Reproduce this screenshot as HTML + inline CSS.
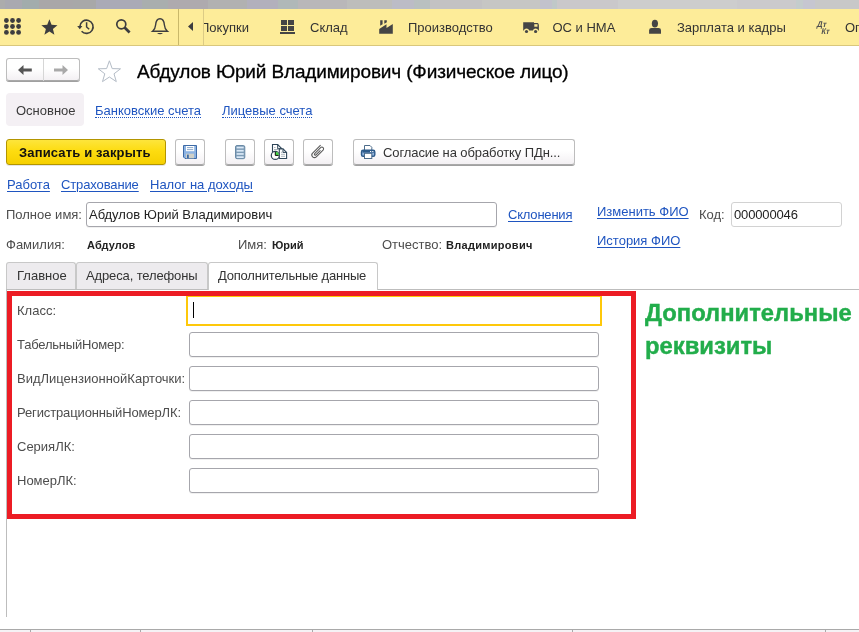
<!DOCTYPE html>
<html><head><meta charset="utf-8">
<style>
*{box-sizing:border-box;margin:0;padding:0}
html,body{width:859px;height:632px;overflow:hidden;background:#fff}
body{position:relative;will-change:transform;font-family:"Liberation Sans",sans-serif;font-size:13px;color:#333}
.a{position:absolute;white-space:nowrap;line-height:15px}
.top{position:absolute;left:0;top:0;width:859px;height:9px;background:linear-gradient(90deg,#acacac 0px,#acacac 5px,#a9a9b0 5px,#a9a9b0 22px,#a2acac 22px,#a2acac 39px,#a9a7a8 39px,#a9a7a8 73px,#a8a8a8 73px,#a8a8a8 96px,#aaaab6 96px,#aaaab6 142px,#a9aeae 142px,#a9aeae 168px,#aeaaae 168px,#aeaaae 208px,#b1b1b1 208px,#b1b1b1 247px,#b2b0bc 247px,#b2b0bc 278px,#b0b8b8 278px,#b0b8b8 298px,#b9b7b9 298px,#b9b7b9 347px,#bdbdbb 347px,#bdbdbb 392px,#bcbcc6 392px,#bcbcc6 414px,#b9c0c0 414px,#b9c0c0 430px,#c3c2c3 430px,#c3c2c3 482px,#c6c6c4 482px,#c6c6c4 540px,#c2c2cc 540px,#c2c2cc 552px,#c0c8c8 552px,#c0c8c8 557px,#cac8ca 557px,#cac8ca 618px,#cdcdcd 618px,#cdcdcd 737px,#cbcacc 737px,#cbcacc 796px,#c4cccc 796px,#c4cccc 803px,#c6c6d0 803px,#c6c6d0 815px,#c8c8c8 815px,#c8c8c8 859px)}
.bar{position:absolute;left:0;top:9px;width:859px;height:37px;background:#fdec99;border-bottom:1px solid #d9c77c}
.sep{position:absolute;top:9px;width:1px;height:36px}
.tb{color:#333}
.btn{position:absolute;border:1px solid #bdbdbd;border-bottom-color:#a9a9a9;border-radius:3px;background:linear-gradient(#fff 0%,#fff 45%,#f3f0f3 100%);box-shadow:0 1px 0 #a0a0a0}
.lnk{color:#1f55c0;text-decoration:underline;text-underline-offset:2px}
.dot{color:#1f55c0;border-bottom:1px dotted #1f55c0}
.inp{position:absolute;border:1px solid #a6a6ac;border-radius:3px;background:#fff;box-shadow:0 1px 0 rgba(0,0,0,0.06)}
.lbl{color:#4d4d4d}
.bold{font-weight:bold;font-size:11px;color:#222}
</style></head><body>
<div class="top"></div>
<div class="bar"></div>
<div class="sep" style="left:178px;background:#c9b86a"></div>
<div class="sep" style="left:203px;background:#dccb85"></div>

<!-- toolbar icons -->
<svg style="position:absolute;left:0;top:0" width="859" height="46" viewBox="0 0 859 46">
 <g fill="#3d3d3f">
  <circle cx="6.4" cy="20.5" r="2.4"/><circle cx="12.5" cy="20.5" r="2.4"/><circle cx="18.6" cy="20.5" r="2.4"/>
  <circle cx="6.4" cy="26.5" r="2.4"/><circle cx="12.5" cy="26.5" r="2.4"/><circle cx="18.6" cy="26.5" r="2.4"/>
  <circle cx="6.4" cy="32.4" r="2.4"/><circle cx="12.5" cy="32.4" r="2.4"/><circle cx="18.6" cy="32.4" r="2.4"/>
  <polygon points="49.40,19.30 51.57,24.81 57.48,25.17 52.92,28.94 54.40,34.68 49.40,31.50 44.40,34.68 45.88,28.94 41.32,25.17 47.23,24.81"/>
  <polygon points="193,22 193,31 188,26.5"/>
  <polygon points="77.2,26 82.4,26 79.8,29.2"/>
  <path d="M157 33 Q160 35.6 163 33 Z"/>
 </g>
 <g fill="none" stroke="#3d3d3f">
  <path d="M79.9 26.6 A6.6 6.6 0 1 1 81.6 31.2" stroke-width="1.6"/>
  <path d="M86.6 22.3 V27 L89.2 29.3" stroke-width="1.5"/>
  <circle cx="121.3" cy="24.3" r="4.5" stroke-width="1.7"/>
  <path d="M124.6 27.6 L129.6 32.4" stroke-width="2.8"/>
  <path d="M152.6 31.2 C154.6 29.6 155.4 27.6 155.6 25 C155.9 20.8 157.6 18.7 160 18.7 C162.4 18.7 164.1 20.8 164.4 25 C164.6 27.6 165.4 29.6 167.4 31.2 Z" stroke-width="1.4"/>
 </g>
 <g fill="#454545">
  <rect x="281" y="20" width="6" height="5"/><rect x="288" y="20" width="6" height="5"/>
  <rect x="281" y="26" width="6" height="5"/><rect x="288" y="26" width="6" height="5"/>
  <rect x="280" y="32" width="15" height="2"/>
  <polygon points="379.2,29.1 386.5,24.2 386.5,28 392.8,24.1 392.8,33.8 379.2,33.8"/>
  <polygon points="380.2,20.2 382.6,20.2 382.6,24.3 380.2,25.8"/>
  <polygon points="384.3,20.2 386.8,20.2 386.8,22.3 384.3,23.8"/>
  <path d="M523.2 22.2 H534 V23.1 H537.6 Q538.9 23.6 538.9 25.5 V30.6 H538.3 A2.8 2.8 0 0 0 532.9 30.6 H529.2 A2.8 2.8 0 0 0 523.8 30.6 H523.2 Z"/>
  <circle cx="526.5" cy="31.5" r="1.6"/><circle cx="535.6" cy="31.5" r="1.6"/>
  <ellipse cx="654.9" cy="23.6" rx="3.1" ry="3.9"/>
  <path d="M649.1 33.8 V30.2 Q649.1 28 651.6 28 H658.5 Q661 28 661 30.2 V33.8 Z"/>
 </g>
 <rect x="534.3" y="24.2" width="3.2" height="2.5" fill="#fdec99"/>
 <g transform="translate(823 27) skewX(-12) translate(-823 -27)" font-family="Liberation Sans" font-weight="bold" font-size="8.2" fill="#505050">
 <text x="816.5" y="26.6" textLength="9.5" lengthAdjust="spacingAndGlyphs">Дт</text>
 <text x="822.5" y="34" textLength="8" lengthAdjust="spacingAndGlyphs">Кт</text>
 </g>
</svg>

<div style="position:absolute;left:204px;top:9px;width:655px;height:36px;overflow:hidden">
 <div class="a tb" style="left:-4px;top:11px">Покупки</div>
 <div class="a tb" style="left:106px;top:11px">Склад</div>
 <div class="a tb" style="left:204px;top:11px">Производство</div>
 <div class="a tb" style="left:348.5px;top:11px">ОС и НМА</div>
 <div class="a tb" style="left:473px;top:11px">Зарплата и кадры</div>
 <div class="a tb" style="left:641px;top:11px">Операции</div>
</div>

<!-- header -->
<div class="btn" style="left:6px;top:58px;width:74px;height:23px"></div>
<div style="position:absolute;left:43px;top:59px;width:1px;height:22px;background:#d6d6d6"></div>
<svg style="position:absolute;left:0;top:50px" width="130" height="40" viewBox="0 50 130 40">
 <path d="M18 70 L23.5 65 V68.6 H31.8 V71.4 H23.5 V75 Z" fill="#555"/>
 <path d="M68 70 L62.5 65 V68.6 H54 V71.4 H62.5 V75 Z" fill="#a9a9a9"/>
 <polygon points="109.4,60.8 112.2,68.6 120.5,68.8 114,73.8 116.3,81.6 109.4,77 102.5,81.6 104.8,73.8 98.3,68.8 106.6,68.6" fill="none" stroke="#b4bcc6" stroke-width="1"/>
</svg>
<div class="a" style="left:137px;top:61px;font-size:19px;letter-spacing:-0.15px;line-height:22px;color:#000;-webkit-text-stroke:0.3px #000">Абдулов Юрий Владимирович (Физическое лицо)</div>

<div style="position:absolute;left:6px;top:93px;width:78px;height:33px;background:#f4f0f4;border-radius:4px"></div>
<div class="a" style="left:16px;top:103px;color:#3a3a3a">Основное</div>
<div class="a dot" style="left:95px;top:103px;height:15px">Банковские счета</div>
<div class="a dot" style="left:222px;top:103px;height:15px">Лицевые счета</div>

<!-- command bar -->
<div style="position:absolute;left:6px;top:139px;width:160px;height:26px;border:1px solid #b39500;border-radius:3px;background:linear-gradient(#fde53c 0%,#fddc10 45%,#f6d000 100%);box-shadow:0 1px 0 rgba(0,0,0,0.1)"></div>
<div class="a" style="left:19px;top:145px;font-weight:bold;color:#111;letter-spacing:0.15px">Записать и закрыть</div>
<div class="btn" style="left:175px;top:139px;width:30px;height:26px"></div>
<div class="btn" style="left:225px;top:139px;width:30px;height:26px"></div>
<div class="btn" style="left:264px;top:139px;width:30px;height:26px"></div>
<div class="btn" style="left:303px;top:139px;width:30px;height:26px"></div>
<div class="btn" style="left:353px;top:139px;width:222px;height:26px"></div>
<div class="a" style="left:383px;top:145px;color:#333;letter-spacing:-0.1px">Согласие на обработку ПДн...</div>
<svg style="position:absolute;left:170px;top:139px" width="220" height="27" viewBox="170 139 220 27">
 <!-- floppy -->
 <path d="M183.5 145.5 H196.5 V158.5 H185 L183.5 157 Z" fill="#8db3e2" stroke="#3d6aa6" stroke-width="1"/>
 <rect x="186" y="146" width="8.2" height="5.2" fill="#fff"/>
 <rect x="187" y="147.2" width="6.2" height="0.9" fill="#7e9fc4"/>
 <rect x="187" y="149.2" width="6.2" height="0.9" fill="#7e9fc4"/>
 <rect x="186" y="153.7" width="8" height="4.6" fill="#cfd0c8"/>
 <rect x="187" y="154.6" width="1.8" height="3.7" fill="#3d6aa6"/>
 <!-- list -->
 <rect x="235.5" y="145.5" width="9.3" height="13.2" rx="1.5" fill="#7d9cb6" stroke="#6a8aa6" stroke-width="1"/>
 <rect x="236.6" y="146.7" width="7.1" height="1.7" fill="#dbe9f7"/>
 <rect x="236.6" y="149.9" width="7.1" height="1.7" fill="#dbe9f7"/>
 <rect x="236.6" y="153.1" width="7.1" height="1.7" fill="#dbe9f7"/>
 <rect x="236.6" y="156.3" width="7.1" height="1.7" fill="#dbe9f7"/>
 <!-- docs -->
 <path d="M272.5 155 V144.5 H277.7 L282 148.8" fill="#fff" stroke="#2e4558" stroke-width="1.1"/>
 <path d="M279.3 158.5 V148.8 H283 L286.6 152.4 V158.5 Z" fill="#fff" stroke="#2e4558" stroke-width="1.1"/>
 <path d="M277.7 144.5 V148.8 H282" fill="none" stroke="#2e4558" stroke-width="1"/>
 <path d="M283 148.8 V152.4 H286.6" fill="none" stroke="#2e4558" stroke-width="1"/>
 <g stroke="#9aa4ac" stroke-width="0.8"><path d="M274 147.5 H275.5 M274 149.5 H278 M281 152.3 H282.5 M281 154.3 H285 M281 156.3 H285"/></g>
 <circle cx="275.3" cy="155.4" r="4" fill="#fff" stroke="#2e4558" stroke-width="1.2"/>
 <path d="M275.3 155.4 V151.8 A3.6 3.6 0 0 1 278.9 155.4 Z" fill="#46d646"/>
 <path d="M275.3 151.8 V155.4 H278.6" fill="none" stroke="#111" stroke-width="1"/>
 <!-- clip -->
 <g transform="translate(318,151.5) rotate(45)" fill="none" stroke="#5a5a5a" stroke-width="1.05">
  <path d="M-2.6 -6.3 V5 A2.6 2.6 0 0 0 2.6 5 V-4.6 A1.75 1.75 0 0 0 -0.9 -4.6 V3.8 A0.9 0.9 0 0 0 0.9 3.8 V-2.6"/>
 </g>
 <!-- printer -->
 <path d="M364.5 150 V145.5 H370 L371.8 147.3 V150" fill="#fff" stroke="#4d6c8a" stroke-width="1"/>
 <rect x="361.5" y="150.3" width="13.3" height="6" rx="1.6" fill="#8fb2dc" stroke="#2c5a8a" stroke-width="1.4"/>
 <rect x="362.5" y="151" width="11.5" height="1.6" fill="#2c5a8a"/>
 <rect x="370" y="151" width="1.2" height="1" fill="#fff"/><rect x="372.2" y="151" width="1.2" height="1" fill="#fff"/>
 <rect x="364.5" y="153.3" width="7.3" height="5.2" fill="#fff" stroke="#4d6c8a" stroke-width="1"/>
</svg>


<div class="a lnk" style="left:7px;top:177px">Работа</div>
<div class="a lnk" style="left:61px;top:177px;letter-spacing:-0.12px">Страхование</div>
<div class="a lnk" style="left:150px;top:177px">Налог на доходы</div>

<!-- name row -->
<div class="a lbl" style="left:6px;top:207px">Полное имя:</div>
<div class="inp" style="left:86px;top:202px;width:411px;height:25px"></div>
<div class="a" style="left:89px;top:207px;color:#222">Абдулов Юрий Владимирович</div>
<div class="a lnk" style="left:508px;top:207px;letter-spacing:-0.2px">Склонения</div>
<div class="a lnk" style="left:597px;top:204px">Изменить ФИО</div>
<div class="a lbl" style="left:699px;top:207px">Код:</div>
<div class="inp" style="left:731px;top:202px;width:111px;height:25px;border-color:#d2d2d2;box-shadow:none"></div>
<div class="a" style="left:734px;top:207px;color:#222;letter-spacing:-0.15px">000000046</div>
<div class="a lnk" style="left:597px;top:233px">История ФИО</div>

<div class="a lbl" style="left:6px;top:237px">Фамилия:</div>
<div class="a bold" style="left:87px;top:238px;letter-spacing:0.1px">Абдулов</div>
<div class="a lbl" style="left:238px;top:237px">Имя:</div>
<div class="a bold" style="left:272px;top:238px">Юрий</div>
<div class="a lbl" style="left:382px;top:237px">Отчество:</div>
<div class="a bold" style="left:446px;top:238px;letter-spacing:0.3px">Владимирович</div>

<!-- tabs -->
<div style="position:absolute;left:6px;top:289px;width:853px;height:1px;background:#bdbdbd"></div>
<div style="position:absolute;left:6px;top:262px;width:70px;height:27px;background:#edebee;border:1px solid #c8c8c8;border-bottom:none;border-radius:3px 3px 0 0"></div>
<div style="position:absolute;left:76px;top:262px;width:132px;height:27px;background:#edebee;border:1px solid #c8c8c8;border-bottom:none;border-radius:3px 3px 0 0"></div>
<div style="position:absolute;left:208px;top:262px;width:170px;height:28px;background:#fff;border:1px solid #c8c8c8;border-bottom:none;border-radius:3px 3px 0 0"></div>
<div class="a" style="left:17px;top:268px;color:#333">Главное</div>
<div class="a" style="left:86px;top:268px;color:#333;letter-spacing:-0.13px">Адреса, телефоны</div>
<div class="a" style="left:218px;top:268px;color:#333;letter-spacing:-0.2px">Дополнительные данные</div>

<div style="position:absolute;left:6px;top:290px;width:1px;height:327px;background:#bdbdbd"></div>

<!-- red box -->
<div style="position:absolute;left:7px;top:291px;width:629px;height:228px;border:5px solid #ec1c24"></div>

<div class="a lbl" style="left:17px;top:303px">Класс:</div>
<div style="position:absolute;left:186px;top:296px;width:416px;height:30px;border:2px solid #fec80a;border-top-width:1.5px;background:#fff"></div>
<div style="position:absolute;left:193px;top:302px;width:1px;height:16px;background:#000"></div>
<div class="a lbl" style="left:17px;top:337px;letter-spacing:-0.2px">ТабельныйНомер:</div>
<div class="inp" style="left:189px;top:332px;width:410px;height:25px"></div>
<div class="a lbl" style="left:17px;top:371px">ВидЛицензионнойКарточки:</div>
<div class="inp" style="left:189px;top:366px;width:410px;height:25px"></div>
<div class="a lbl" style="left:17px;top:405px;letter-spacing:-0.13px">РегистрационныйНомерЛК:</div>
<div class="inp" style="left:189px;top:400px;width:410px;height:25px"></div>
<div class="a lbl" style="left:17px;top:439px">СерияЛК:</div>
<div class="inp" style="left:189px;top:434px;width:410px;height:25px"></div>
<div class="a lbl" style="left:17px;top:473px">НомерЛК:</div>
<div class="inp" style="left:189px;top:468px;width:410px;height:25px"></div>

<div class="a" style="left:645px;top:297px;font-size:23.8px;line-height:32.5px;font-weight:bold;color:#22ad4b;-webkit-text-stroke:0.4px #22ad4b;white-space:normal">Дополнительные<br>реквизиты</div>

<!-- bottom -->
<div style="position:absolute;left:0;top:629px;width:859px;height:1px;background:#a9a9a9"></div>
<div style="position:absolute;left:0;top:630px;width:859px;height:2px;background:#f5f2f5"></div>
<div style="position:absolute;left:30px;top:629px;width:1px;height:3px;background:#a9a9a9"></div>
<div style="position:absolute;left:140px;top:629px;width:1px;height:3px;background:#a9a9a9"></div>
<div style="position:absolute;left:312px;top:629px;width:1px;height:3px;background:#a9a9a9"></div>
<div style="position:absolute;left:572px;top:629px;width:1px;height:3px;background:#a9a9a9"></div>
<div style="position:absolute;left:825px;top:629px;width:1px;height:3px;background:#a9a9a9"></div>
</body></html>
